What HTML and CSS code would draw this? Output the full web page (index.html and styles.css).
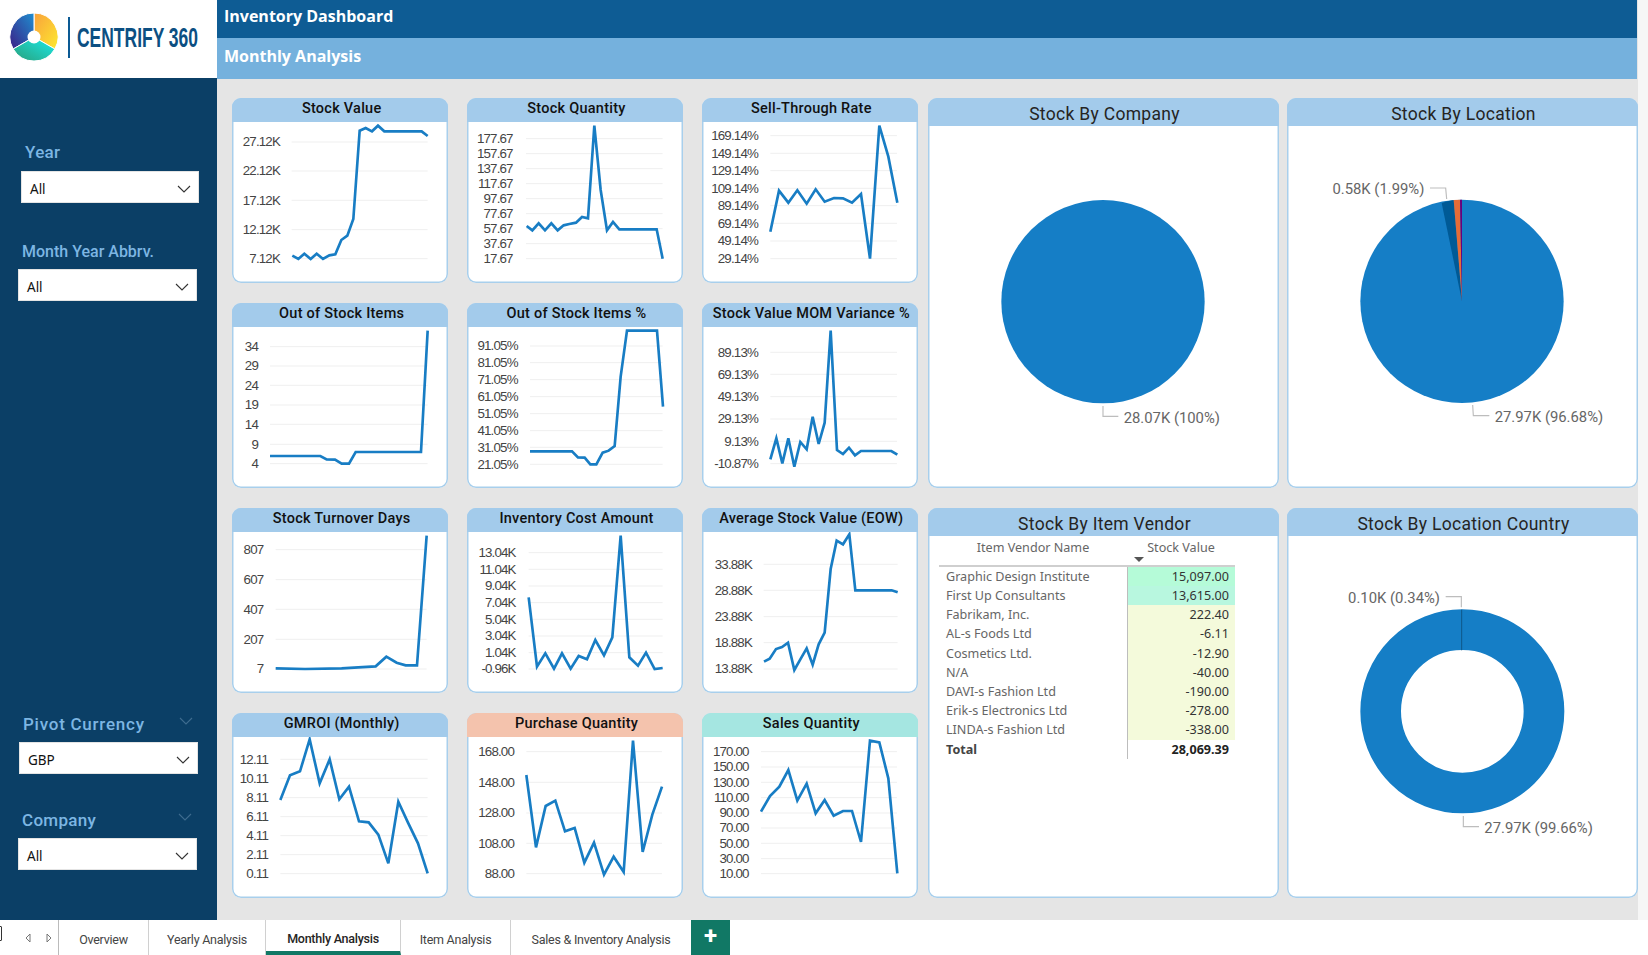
FILE: index.html
```html
<!DOCTYPE html>
<html lang="en">
<head>
<meta charset="utf-8">
<title>Inventory Dashboard</title>
<link rel="stylesheet" href="styles.css">
</head>
<body>
<div class="report">
  <aside class="sidebar">
    <div class="logo">
      <svg class="logo-mark" viewBox="0 0 56 56" aria-hidden="true">
        <defs>
          <linearGradient id="gy" x1="0" y1="0" x2="1" y2="1"><stop offset="0" stop-color="#f9a13c"/><stop offset="1" stop-color="#fde92f"/></linearGradient>
          <linearGradient id="gb" x1="1" y1="0" x2="0" y2="1"><stop offset="0" stop-color="#1f8fd0"/><stop offset="1" stop-color="#3b1f86"/></linearGradient>
          <linearGradient id="gt" x1="0" y1="1" x2="1" y2="0"><stop offset="0" stop-color="#2a9f7a"/><stop offset="1" stop-color="#19ecec"/></linearGradient>
        </defs>
        <path class="logo-seg" d="M28 28L28 4A24 24 0 0 1 48.8 40Z" fill="url(#gy)"/>
        <path class="logo-seg" d="M28 28L7.2 40A24 24 0 0 1 28 4Z" fill="url(#gb)"/>
        <path class="logo-seg" d="M28 28L48.8 40A24 24 0 0 1 7.2 40Z" fill="url(#gt)"/>
        <circle cx="28" cy="28" r="6.5" fill="#fff"/>
      </svg>
      <span class="logo-rule"></span>
      <svg class="logo-word" viewBox="0 0 124 34"><text x="0" y="27" textLength="121" lengthAdjust="spacingAndGlyphs">CENTRIFY 360</text></svg>
    </div>
    <div class="slicers">
      <div class="slicer slicer-year">
        <div class="slicer-label">Year</div>
        <div class="slicer-box"><span>All</span><svg class="chev" viewBox="0 0 14 8"><path d="M1 1l6 6 6-6"/></svg></div>
      </div>
      <div class="slicer slicer-month">
        <div class="slicer-label">Month Year Abbrv.</div>
        <div class="slicer-box"><span>All</span><svg class="chev" viewBox="0 0 14 8"><path d="M1 1l6 6 6-6"/></svg></div>
      </div>
      <div class="slicer slicer-pivot">
        <div class="slicer-label">Pivot Currency<svg class="chev dim" viewBox="0 0 14 8"><path d="M1 1l6 6 6-6"/></svg></div>
        <div class="slicer-box"><span>GBP</span><svg class="chev" viewBox="0 0 14 8"><path d="M1 1l6 6 6-6"/></svg></div>
      </div>
      <div class="slicer slicer-company">
        <div class="slicer-label">Company<svg class="chev dim" viewBox="0 0 14 8"><path d="M1 1l6 6 6-6"/></svg></div>
        <div class="slicer-box"><span>All</span><svg class="chev" viewBox="0 0 14 8"><path d="M1 1l6 6 6-6"/></svg></div>
      </div>
    </div>
  </aside>
  <main class="main">
    <header class="banner">
      <h1 class="banner-top">Inventory Dashboard</h1>
      <h2 class="banner-sub">Monthly Analysis</h2>
    </header>
    <div class="canvas">
      <section class="small-grid">

        <article class="card"><h3 class="card-title">Stock Value</h3><div class="card-body">
          <svg class="plot" viewBox="21 96 649 483" preserveAspectRatio="none">
            <path class="gridline" d="M200 156H608M200 243H608M200 331H608M200 419H608M200 506H608"/>
            <g class="axis"><text x="165" y="156">27.12K</text><text x="165" y="243">22.12K</text><text x="165" y="331">17.12K</text><text x="165" y="419">12.12K</text><text x="165" y="506">7.12K</text></g>
            <polyline class="line" points="202,497 220,507 238,491 257,507 275,491 294,507 313,496 331,493 349,450 367,437 385,387 404,122 422,114 441,124 459,107 478,124 590,124 608,138"/>
          </svg></div></article>

        <article class="card"><h3 class="card-title">Stock Quantity</h3><div class="card-body">
          <svg class="plot" viewBox="725 96 649 483" preserveAspectRatio="none">
            <path class="gridline" d="M902 146H1312M902 191H1312M902 236H1312M902 281H1312M902 326H1312M902 371H1312M902 416H1312M902 461H1312M902 506H1312"/>
            <g class="axis"><text x="862" y="146">177.67</text><text x="862" y="191">157.67</text><text x="862" y="236">137.67</text><text x="862" y="281">117.67</text><text x="862" y="326">97.67</text><text x="862" y="371">77.67</text><text x="862" y="416">57.67</text><text x="862" y="461">37.67</text><text x="862" y="506">17.67</text></g>
            <polyline class="line" points="904,408 921,421 940,400 959,421 978,400 997,421 1015,406 1032,402 1052,398 1070,381 1088,385 1107,107 1126,300 1145,421 1163,396 1182,418 1294,418 1312,506"/>
          </svg></div></article>

        <article class="card"><h3 class="card-title">Sell-Through Rate</h3><div class="card-body">
          <svg class="plot" viewBox="35 96 649 483" preserveAspectRatio="none">
            <path class="gridline" d="M240 137H620M240 190H620M240 242H620M240 295H620M240 347H620M240 400H620M240 453H620M240 506H620"/>
            <g class="axis"><text x="203" y="137">169.14%</text><text x="203" y="190">149.14%</text><text x="203" y="242">129.14%</text><text x="203" y="295">109.14%</text><text x="203" y="347">89.14%</text><text x="203" y="400">69.14%</text><text x="203" y="453">49.14%</text><text x="203" y="506">29.14%</text></g>
            <polyline class="line" points="240,425 266,302 294,338 321,301 349,341 376,298 403,335 431,324 458,325 485,338 512,312 539,506 567,107 594,200 621,338"/>
          </svg></div></article>

        <article class="card"><h3 class="card-title">Out of Stock Items</h3><div class="card-body">
          <svg class="plot" viewBox="21 711 649 483" preserveAspectRatio="none">
            <path class="gridline" d="M135 770H608M135 828H608M135 886H608M135 945H608M135 1003H608M135 1063H608M135 1121H608"/>
            <g class="axis"><text x="99" y="770">34</text><text x="99" y="828">29</text><text x="99" y="886">24</text><text x="99" y="945">19</text><text x="99" y="1003">14</text><text x="99" y="1063">9</text><text x="99" y="1121">4</text></g>
            <polyline class="line" points="135,1098 286,1098 305,1108 330,1109 350,1121 372,1121 392,1086 588,1086 608,722"/>
          </svg></div></article>

        <article class="card"><h3 class="card-title">Out of Stock Items %</h3><div class="card-body">
          <svg class="plot" viewBox="725 711 649 483" preserveAspectRatio="none">
            <path class="gridline" d="M914 768H1312M914 818H1312M914 869H1312M914 920H1312M914 971H1312M914 1022H1312M914 1072H1312M914 1123H1312"/>
            <g class="axis"><text x="877" y="768">91.05%</text><text x="877" y="818">81.05%</text><text x="877" y="869">71.05%</text><text x="877" y="920">61.05%</text><text x="877" y="971">51.05%</text><text x="877" y="1022">41.05%</text><text x="877" y="1072">31.05%</text><text x="877" y="1123">21.05%</text></g>
            <polyline class="line" points="914,1084 1040,1084 1058,1102 1078,1103 1095,1123 1113,1123 1132,1088 1150,1082 1168,1068 1186,860 1205,722 1295,722 1313,950"/>
          </svg></div></article>

        <article class="card"><h3 class="card-title">Stock Value MOM Variance %</h3><div class="card-body">
          <svg class="plot" viewBox="35 711 649 483" preserveAspectRatio="none">
            <path class="gridline" d="M240 787H620M240 853H620M240 920H620M240 987H620M240 1054H620M240 1121H620"/>
            <g class="axis"><text x="203" y="787">89.13%</text><text x="203" y="853">69.13%</text><text x="203" y="920">49.13%</text><text x="203" y="987">29.13%</text><text x="203" y="1054">9.13%</text><text x="203" y="1121">-10.87%</text></g>
            <polyline class="line" points="240,1108 258,1045 276,1120 294,1045 312,1130 330,1056 349,1078 367,980 385,1062 403,998 421,722 440,1080 458,1092 476,1073 494,1096 512,1083 603,1083 621,1094"/>
          </svg></div></article>

        <article class="card"><h3 class="card-title">Stock Turnover Days</h3><div class="card-body">
          <svg class="plot" viewBox="21 96 649 483" preserveAspectRatio="none">
            <path class="gridline" d="M152 149H605M152 239H605M152 328H605M152 418H605M152 507H605"/>
            <g class="axis"><text x="115" y="149">807</text><text x="115" y="239">607</text><text x="115" y="328">407</text><text x="115" y="418">207</text><text x="115" y="507">7</text></g>
            <polyline class="line" points="152,505 240,507 350,505 400,502 452,499 484,470 515,488 542,496 576,496 605,107"/>
          </svg></div></article>

        <article class="card"><h3 class="card-title">Inventory Cost Amount</h3><div class="card-body">
          <svg class="plot" viewBox="725 96 649 483" preserveAspectRatio="none">
            <path class="gridline" d="M910 158H1312M910 208H1312M910 258H1312M910 308H1312M910 358H1312M910 408H1312M910 458H1312M910 507H1312"/>
            <g class="axis"><text x="871" y="158">13.04K</text><text x="871" y="208">11.04K</text><text x="871" y="258">9.04K</text><text x="871" y="308">7.04K</text><text x="871" y="358">5.04K</text><text x="871" y="408">3.04K</text><text x="871" y="458">1.04K</text><text x="871" y="507">-0.96K</text></g>
            <polyline class="line" points="910,292 935,500 960,460 986,506 1010,460 1036,506 1060,468 1085,478 1110,420 1136,466 1161,412 1186,107 1212,472 1238,497 1262,458 1288,507 1312,504"/>
          </svg></div></article>

        <article class="card"><h3 class="card-title">Average Stock Value (EOW)</h3><div class="card-body">
          <svg class="plot" viewBox="35 96 649 483" preserveAspectRatio="none">
            <path class="gridline" d="M220 193H622M220 271H622M220 350H622M220 428H622M220 507H622"/>
            <g class="axis"><text x="185" y="193">33.88K</text><text x="185" y="271">28.88K</text><text x="185" y="350">23.88K</text><text x="185" y="428">18.88K</text><text x="185" y="507">13.88K</text></g>
            <polyline class="line" points="221,485 238,476 257,447 275,441 293,428 312,510 330,478 349,445 367,494 385,433 403,398 421,207 439,122 458,133 477,103 495,271 604,271 622,277"/>
          </svg></div></article>

        <article class="card"><h3 class="card-title">GMROI (Monthly)</h3><div class="card-body">
          <svg class="plot" viewBox="21 711 649 483" preserveAspectRatio="none">
            <path class="gridline" d="M166 778H608M166 835H608M166 893H608M166 950H608M166 1007H608M166 1064H608M166 1121H608"/>
            <g class="axis"><text x="129" y="778">12.11</text><text x="129" y="835">10.11</text><text x="129" y="893">8.11</text><text x="129" y="950">6.11</text><text x="129" y="1007">4.11</text><text x="129" y="1064">2.11</text><text x="129" y="1121">0.11</text></g>
            <polyline class="line" points="166,900 195,826 225,814 254,718 284,850 314,778 343,898 372,860 402,964 431,967 460,1004 490,1090 520,905 549,968 579,1030 608,1120"/>
          </svg></div></article>

        <article class="card"><h3 class="card-title title-peach">Purchase Quantity</h3><div class="card-body">
          <svg class="plot" viewBox="725 711 649 483" preserveAspectRatio="none">
            <path class="gridline" d="M903 755H1310M903 847H1310M903 939H1310M903 1030H1310M903 1121H1310"/>
            <g class="axis"><text x="866" y="755">168.00</text><text x="866" y="847">148.00</text><text x="866" y="939">128.00</text><text x="866" y="1030">108.00</text><text x="866" y="1121">88.00</text></g>
            <polyline class="line" points="903,825 932,1042 961,918 990,902 1019,994 1048,984 1077,1088 1106,1028 1136,1124 1165,1070 1195,1116 1223,722 1252,1056 1281,944 1310,860"/>
          </svg></div></article>

        <article class="card"><h3 class="card-title title-mint">Sales Quantity</h3><div class="card-body">
          <svg class="plot" viewBox="35 711 649 483" preserveAspectRatio="none">
            <path class="gridline" d="M212 755H620M212 801H620M212 847H620M212 893H620M212 939H620M212 984H620M212 1030H620M212 1076H620M212 1121H620"/>
            <g class="axis"><text x="175" y="755">170.00</text><text x="175" y="801">150.00</text><text x="175" y="847">130.00</text><text x="175" y="893">110.00</text><text x="175" y="939">90.00</text><text x="175" y="984">70.00</text><text x="175" y="1030">50.00</text><text x="175" y="1076">30.00</text><text x="175" y="1121">10.00</text></g>
            <polyline class="line" points="212,935 239,888 267,860 294,810 321,902 349,851 376,940 403,900 430,947 458,933 485,933 512,1026 539,722 567,727 594,835 621,1120"/>
          </svg></div></article>
      </section>

      <section class="big-grid">
        <article class="card"><h3 class="card-title title-big">Stock By Company</h3><div class="card-body">
          <svg class="plot" viewBox="9 108 1053 1086" preserveAspectRatio="none">
            <circle class="slice-main" cx="534" cy="635" r="305"/>
            <polyline class="leader" points="534,948 534,979 580,979"/>
            <text class="callout" x="596" y="998">28.07K (100%)</text>
          </svg></div></article>

        <article class="card"><h3 class="card-title title-big">Stock By Location</h3><div class="card-body">
          <svg class="plot" viewBox="21 108 1053 1086" preserveAspectRatio="none">
            <circle class="slice-main" cx="546" cy="634" r="305"/>
            <path class="slice-navy" d="M546 634L485 339A305 305 0 0 1 521 330Z"/>
            <path class="slice-orange" d="M546 634L521 330A305 305 0 0 1 540 329Z"/>
            <path class="slice-purple" d="M546 634L540 329A305 305 0 0 1 546 329Z"/>
            <polyline class="leader" points="450,294 497,294 500,327"/>
            <polyline class="leader" points="578,945 580,977 628,977"/>
            <text class="callout callout-end" x="433" y="313">0.58K (1.99%)</text>
            <text class="callout" x="644" y="996">27.97K (96.68%)</text>
          </svg></div></article>

        <article class="card"><h3 class="card-title title-big">Stock By Item Vendor</h3><div class="card-body">
          <table class="vendors">
            <thead><tr><th>Item Vendor Name</th><th class="sorted">Stock Value</th></tr></thead>
            <tbody>
              <tr><td>Graphic Design Institute</td><td class="num hot-a">15,097.00</td></tr>
              <tr><td>First Up Consultants</td><td class="num hot-b">13,615.00</td></tr>
              <tr><td>Fabrikam, Inc.</td><td class="num pale">222.40</td></tr>
              <tr><td>AL-s Foods Ltd</td><td class="num pale">-6.11</td></tr>
              <tr><td>Cosmetics Ltd.</td><td class="num pale">-12.90</td></tr>
              <tr><td>N/A</td><td class="num pale">-40.00</td></tr>
              <tr><td>DAVI-s Fashion Ltd</td><td class="num pale">-190.00</td></tr>
              <tr><td>Erik-s Electronics Ltd</td><td class="num pale">-278.00</td></tr>
              <tr><td>LINDA-s Fashion Ltd</td><td class="num pale">-338.00</td></tr>
              <tr class="total"><td>Total</td><td class="num">28,069.39</td></tr>
            </tbody>
          </table></div></article>

        <article class="card"><h3 class="card-title title-big">Stock By Location Country</h3><div class="card-body">
          <svg class="plot" viewBox="21 108 1053 1086" preserveAspectRatio="none">
            <circle class="ring" cx="547" cy="634" r="245"/>
            <path class="ring-sliver" d="M545 329V451"/>
            <polyline class="leader" points="497,290 544,290 544,322"/>
            <polyline class="leader" points="550,948 550,980 597,980"/>
            <text class="callout callout-end" x="480" y="308">0.10K (0.34%)</text>
            <text class="callout" x="613" y="998">27.97K (99.66%)</text>
          </svg></div></article>
      </section>
    </div>
  </main>
  <div class="edge"></div>
</div>
<nav class="tabs">
  <div class="tab-nav">
    <span class="tab-bracket"></span>
    <svg class="tab-arrow" viewBox="0 0 6 10"><path d="M5 1L1 5l4 4Z"/></svg>
    <svg class="tab-arrow" viewBox="0 0 6 10"><path d="M1 1l4 4-4 4Z"/></svg>
  </div>
  <a class="tab tab-1">Overview</a>
  <a class="tab tab-2">Yearly Analysis</a>
  <a class="tab tab-3 active">Monthly Analysis</a>
  <a class="tab tab-4">Item Analysis</a>
  <a class="tab tab-5">Sales &amp; Inventory Analysis</a>
  <a class="tab-add">+</a>
</nav>
</body>
</html>
```
FILE: styles.css
```css
* { box-sizing: border-box; }
html, body { margin: 0; padding: 0; height: 100%; overflow: hidden; background: #fff; }
body { display: flex; flex-direction: column; width: 1648px; height: 955px; font-family: Roboto, "Noto Sans", sans-serif; }
h1, h2, h3 { margin: 0; }

.report { display: flex; height: 920px; flex: none; }
.edge { width: 10px; background: #f6f6f6; flex: none; }

/* sidebar */
.sidebar { width: 217px; flex: none; background: #0b3f66; display: flex; flex-direction: column; }
.logo { height: 78px; background: #fff; display: flex; align-items: center; padding: 0 0 4px 6px; flex: none; }
.logo-mark { width: 56px; height: 56px; flex: none; }
.logo-seg { stroke: #fff; stroke-width: 1; }
.logo-rule { width: 1.5px; height: 41px; background: #0c5a94; margin-left: 6px; flex: none; }
.logo-word { width: 124px; height: 34px; margin-left: 7px; flex: none; overflow: visible; }
.logo-word text { font-family: "Liberation Sans", sans-serif; font-weight: 700; font-size: 28px; fill: #0c4f82; }

.slicers { flex: 1; display: flex; flex-direction: column; }
.slicer-label { color: #7db6e3; font-size: 17px; font-weight: 500; letter-spacing: .3px; line-height: 22px; padding-left: 4px; display: flex; justify-content: space-between; align-items: center; }
.slicer-box { background: #fff; border: 1px solid #e4e4e4; height: 32px; display: flex; align-items: center; justify-content: space-between; padding: 3px 7px 0 8px; font-family: "Noto Sans", sans-serif; font-size: 13.5px; color: #111; margin-top: 7px; }
.chev { width: 14px; height: 8px; flex: none; }
.chev path { fill: none; stroke: #333; stroke-width: 1.1; }
.chev.dim path { stroke: #3f6c8f; }
.slicer-label .chev { margin-right: 5px; margin-top: -6px; }
.slicer-year { margin: 63px 18px 0 21px; }
.slicer-year .slicer-box { margin-top: 8px; }
.slicer-month { margin: 38px 20px 0 18px; }
.slicer-month .slicer-label { font-size: 16px; letter-spacing: 0; }
.slicer-month .slicer-box { margin-top: 6px; }
.slicer-pivot { margin: 412px 19px 0 19px; }
.slicer-pivot .slicer-label { letter-spacing: .75px; }
.slicer-company { margin: 35px 20px 0 18px; }

/* banner */
.main { width: 1421px; flex: none; background: #e5e5e5; display: flex; flex-direction: column; }
.banner { flex: none; }
.banner-top, .banner-sub { font-family: "Open Sans", sans-serif; font-weight: 700; font-size: 16px; color: #fff; padding-left: 7px; margin-right: 1px; display: flex; align-items: center; }
.banner-top { height: 38px; background: #0e5c94; padding-bottom: 6px; }
.banner-sub { height: 41px; background: #75b1dd; padding-bottom: 6px; }

.canvas { display: flex; gap: 10px; padding: 19px 0 0 15px; }
.small-grid { display: grid; grid-template-columns: repeat(3, 216.33px); grid-auto-rows: 185px; column-gap: 18.5px; row-gap: 20px; width: 686px; flex: none; }
.big-grid { display: grid; grid-template-columns: 351px 351px; grid-template-rows: 390px 390px; gap: 20px 8px; flex: none; }

/* cards */
.card { background: #fff; border-radius: 9px; overflow: hidden; display: flex; flex-direction: column; box-shadow: inset 0 0 0 1.5px #a8cfec; min-width: 0; }
.card-title { height: 24px; flex: none; background: #a3cbeb; font-size: 14.5px; font-weight: 500; letter-spacing: .25px; color: #111; text-align: center; line-height: 22px; padding-left: 3px; }
.title-peach { background: #f4c3ad; }
.title-mint { background: #a5e6e1; }
.title-big { height: 28px; font-size: 17.5px; font-weight: 400; letter-spacing: .3px; line-height: 33px; color: #252423; padding-left: 2px; }
.card-body { flex: 1; min-height: 0; }
.plot { display: block; width: 100%; height: 100%; }

.gridline { fill: none; stroke: #efefef; stroke-width: 3; }
.line { fill: none; stroke: #187dc4; stroke-width: 8; stroke-linejoin: miter; }
.axis text { font-family: "Liberation Sans", sans-serif; font-size: 40px; letter-spacing: -2.5px; fill: #444; text-anchor: end; dominant-baseline: central; }

/* pies */
.slice-main { fill: #157ec6; }
.slice-navy { fill: #005a96; }
.slice-orange { fill: #e66c37; }
.slice-purple { fill: #6b007b; }
.ring { fill: none; stroke: #157ec6; stroke-width: 122; }
.ring-sliver { fill: none; stroke: #0d4f7c; stroke-width: 2.5; }
.leader { fill: none; stroke: #bdbdbd; stroke-width: 3.5; }
.callout { font-family: Roboto, sans-serif; font-size: 44.5px; fill: #666; }
.callout-end { text-anchor: end; }

/* table */
.vendors { border-collapse: collapse; table-layout: fixed; width: 296px; margin-left: 11px; font-family: "Noto Sans", sans-serif; font-size: 12.6px; color: #666; }
.vendors th { font-weight: 400; height: 30px; padding: 0 0 6px; text-align: center; border-bottom: 2px solid #cfcfcf; position: relative; }
.vendors th:first-child { width: 188px; }
.vendors td { height: 19.2px; padding: 0 0 0 7px; line-height: 19px; white-space: nowrap; }
.vendors td.num { text-align: right; padding: 0 6px 0 0; color: #333; border-left: 1px solid #bdbdbd; }
.sorted::after { content: ""; position: absolute; left: 7px; top: 21px; border: 5px solid transparent; border-top: 5px solid #555; border-bottom: 0; }
.hot-a { background: #b5fbd8; }
.hot-b { background: #b8f7df; }
.pale { background: #f4fadb; }
.total td { font-weight: 700; color: #444; }
.total td.num { color: #222; }

/* tabs */
.tabs { height: 35px; flex: none; background: #fff; display: flex; }
.tab-nav { width: 59px; flex: none; display: flex; align-items: center; position: relative; padding-left: 25px; gap: 15px; border-right: 1px solid #bbb; }
.tab-bracket { position: absolute; left: -3px; top: 6px; width: 5px; height: 15px; border: 1px solid #333; border-radius: 1px; }
.tab-arrow { width: 6px; height: 10px; }
.tab-arrow path { fill: #fff; stroke: #777; stroke-width: 1; }
.tab { font-size: 12.5px; letter-spacing: -.25px; color: #444; display: flex; align-items: center; justify-content: center; border-right: 1px solid #d0d0d0; flex: none; padding-top: 3px; }
.tab-1 { width: 90px; }
.tab-2 { width: 117px; }
.tab-3 { width: 135px; }
.tab-4 { width: 110px; }
.tab-5 { width: 180px; border-right: 0; }
.tab.active { color: #252423; font-weight: 500; border-bottom: 4px solid #117865; padding-top: 6px; }
.tab-add { width: 39px; background: #117865; color: #fff; font-size: 24px; font-weight: 700; display: flex; align-items: center; justify-content: center; flex: none; padding-bottom: 3px; }
```
